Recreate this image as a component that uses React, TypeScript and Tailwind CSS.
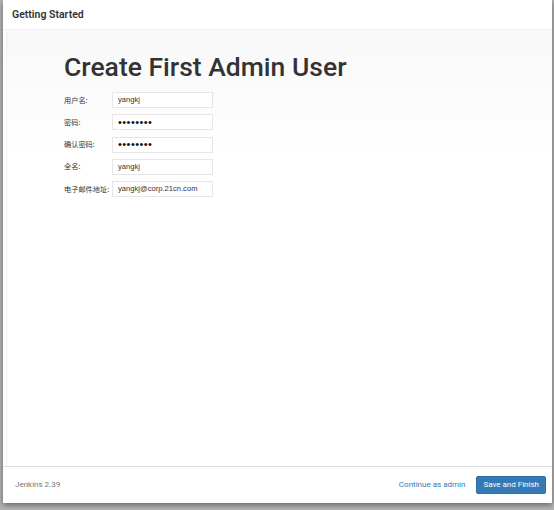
import React from 'react';

const fields: { label: string; value: string; password?: boolean }[] = [
  { label: '用户名:', value: 'yangkj' },
  { label: '密码:', value: '••••••••', password: true },
  { label: '确认密码:', value: '••••••••', password: true },
  { label: '全名:', value: 'yangkj' },
  { label: '电子邮件地址:', value: 'yangkj@corp.21cn.com' },
];

const App: React.FC = () => {
  return (
    <div className="h-[510px] w-[554px] bg-[#b4b4b4] pl-[3px] pr-[2px] pb-[7px] overflow-hidden">
      <div className="h-full bg-white flex flex-col shadow-[0_2px_6px_rgba(0,0,0,0.45)]">
        {/* header */}
        <div className="h-[30px] shrink-0 flex items-center px-[9px] border-b border-[#f0f0f0]">
          <h1 className="text-[10.5px] font-semibold text-[#333] font-['Roboto',sans-serif]">Getting Started</h1>
        </div>

        {/* body */}
        <div className="flex-grow ml-[3px] border-l border-[#f1f1f1] bg-[linear-gradient(#f8f8f8,#ffffff_130px)]">
          <div className="pl-[57px] pt-[20px]">
            <h2 className="text-[26.5px] leading-[34px] font-medium text-[#333] font-['Roboto',sans-serif]">
              Create First Admin User
            </h2>
            <div className="mt-[8px] flex flex-col gap-[6.3px]">
              {fields.map((f, i) => (
                <div key={i} className="flex items-center">
                  <span className="w-[48px] text-[7.2px] text-[#333] font-['Noto_Sans_CJK_SC',sans-serif]">{f.label}</span>
                  <div className="w-[101px] h-[16px] border border-[#e6e6e6] bg-white flex items-center px-[5px]">
                    {f.password ? (
                      <span className="text-[11px] leading-none tracking-[0.45px] text-[#111] font-['Liberation_Sans',sans-serif]">
                        {f.value}
                      </span>
                    ) : (
                      <span className="text-[7.6px] text-[#333] font-['Liberation_Sans',sans-serif]">{f.value}</span>
                    )}
                  </div>
                </div>
              ))}
            </div>
          </div>
        </div>

        {/* footer */}
        <div className="h-[37px] shrink-0 border-t border-[#dcdcdc] flex items-center pl-[12px] pr-[6px] font-['Roboto',sans-serif]">
          <span className="text-[8px] text-[#777]">Jenkins 2.39</span>
          <div className="ml-auto flex items-center gap-[11px]">
            <button className="text-[8px] text-[#337ab7]">Continue as admin</button>
            <button className="h-[18px] px-[6px] rounded-[2px] bg-[#337ab7] border border-[#2e6da4] text-white text-[8px]">
              Save and Finish
            </button>
          </div>
        </div>
      </div>
    </div>
  );
};

export default App;
